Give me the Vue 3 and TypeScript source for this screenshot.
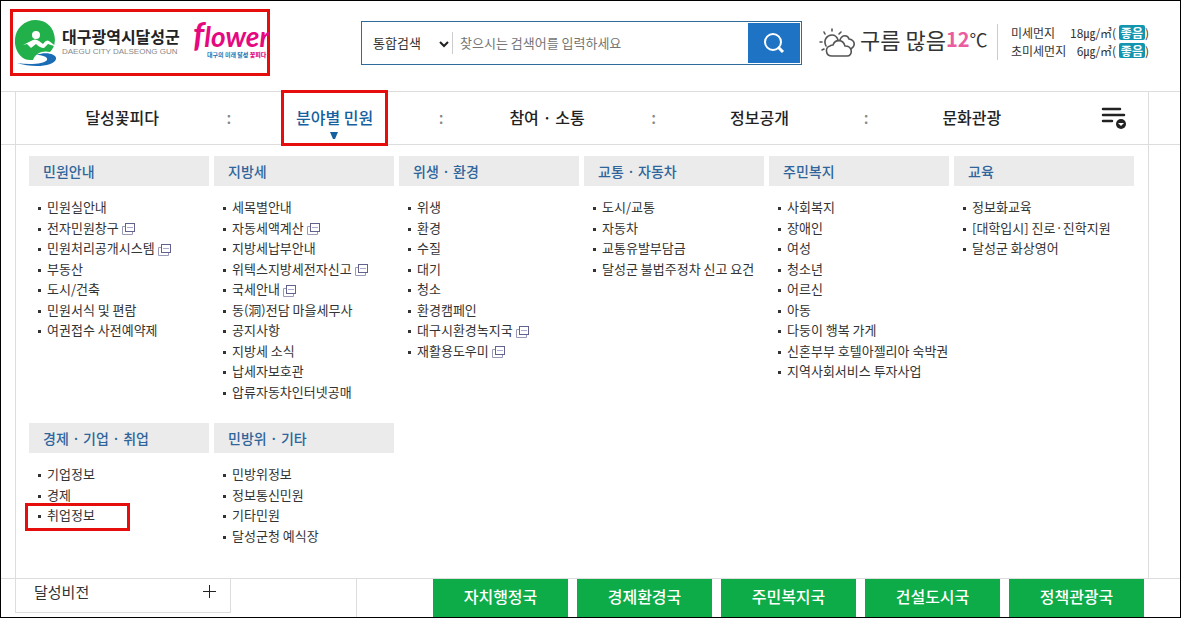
<script setup lang="ts">
import { ref } from 'vue'

interface MenuLink {
  label: string
  external?: boolean
  marked?: boolean
}

interface MenuGroup {
  title: string
  links: MenuLink[]
}

const keyword = ref('')
const scope = ref('통합검색')

const navItems = ['달성꽃피다', '분야별 민원', '참여 · 소통', '정보공개', '문화관광']
const activeNav = ref(1)

const toLinks = (...labels: string[]): MenuLink[] =>
  labels.map((label) => ({
    label: label.replace(/[+!]$/, ''),
    external: label.endsWith('+'),
    marked: label.endsWith('!'),
  }))

const groups: MenuGroup[] = [
  {
    title: '민원안내',
    links: toLinks('민원실안내', '전자민원창구+', '민원처리공개시스템+', '부동산', '도시/건축', '민원서식 및 편람', '여권접수 사전예약제'),
  },
  {
    title: '지방세',
    links: toLinks('세목별안내', '자동세액계산+', '지방세납부안내', '위텍스지방세전자신고+', '국세안내+', '동(洞)전담 마을세무사', '공지사항', '지방세 소식', '납세자보호관', '압류자동차인터넷공매'),
  },
  {
    title: '위생 · 환경',
    links: toLinks('위생', '환경', '수질', '대기', '청소', '환경캠페인', '대구시환경녹지국+', '재활용도우미+'),
  },
  {
    title: '교통 · 자동차',
    links: toLinks('도시/교통', '자동차', '교통유발부담금', '달성군 불법주정차 신고 요건'),
  },
  {
    title: '주민복지',
    links: toLinks('사회복지', '장애인', '여성', '청소년', '어르신', '아동', '다둥이 행복 가게', '신혼부부 호텔아젤리아 숙박권', '지역사회서비스 투자사업'),
  },
  {
    title: '교육',
    links: toLinks('정보화교육', '[대학입시] 진로·진학지원', '달성군 화상영어'),
  },
  { title: '경제 · 기업 · 취업', links: toLinks('기업정보', '경제', '취업정보!') },
  { title: '민방위 · 기타', links: toLinks('민방위정보', '정보통신민원', '기타민원', '달성군청 예식장') },
]

const dust = [
  { label: '미세먼지', value: 18, grade: '좋음' },
  { label: '초미세먼지', value: 6, grade: '좋음' },
]

const bureaus = ['자치행정국', '경제환경국', '주민복지국', '건설도시국', '정책관광국']
</script>

<template>
  <div class="page">
    <header class="top">
      <a class="logo" href="#">
        <svg class="emblem" width="42" height="48" viewBox="0 0 42 48" aria-hidden="true">
          <path d="M8 39 C-3 31 -2 14 6 7 C16 -3 33 0 38 12 C42 22 39 29 35 33 C28 31 20 34 18 41 C14 41 11 41 8 39 Z" fill="#22b04b" />
          <circle cx="21" cy="16" r="4" fill="#fff" />
          <path d="M8 26 L16 22 Q20 19 24 22 L28 25 Q31 20 34 22 L42 28 L33 25 L29 29 Q25 29 21 25 L16 29 L12 25 Z" fill="#fff" />
          <path d="M21 36 C31 32 42 35 41 40 C39 48 17 49 2 44 C15 46 29 45 32 41 C33 38 28 36 21 36 Z" fill="#1a6db5" />
        </svg>
        <span class="names">
          <span class="name-ko">대구광역시달성군</span>
          <span class="name-en">DAEGU CITY DALSEONG GUN</span>
        </span>
        <span class="brand">
          <span class="brand-word"><span class="brand-f">f</span>lower</span>
          <span class="brand-sub">대구의 미래 <b>달성</b> <b class="pink">꽃피다</b></span>
        </span>
      </a>

      <form class="search" @submit.prevent>
        <span class="scope">
          <select v-model="scope" aria-label="검색 범위">
            <option>통합검색</option>
          </select>
          <svg class="chevron" width="10" height="8" viewBox="0 0 10 8" aria-hidden="true">
            <path d="M1 2 L5 6 L9 2" fill="none" stroke="#222" stroke-width="2" />
          </svg>
        </span>
        <input v-model="keyword" type="text" placeholder="찾으시는 검색어를 입력하세요" aria-label="검색어" />
        <button type="submit" aria-label="검색">
          <svg width="22" height="22" viewBox="0 0 22 22" aria-hidden="true">
            <circle cx="10" cy="10" r="8" fill="none" stroke="#fff" stroke-width="2" />
            <path d="M15 15 L20 20" stroke="#fff" stroke-width="3" />
          </svg>
        </button>
      </form>

      <div class="weather">
        <svg width="36" height="30" viewBox="0 0 36 30" fill="none" stroke="#555" stroke-width="1.600" stroke-linecap="round" aria-hidden="true">
          <path d="M13 1 V3 M5 4 L6 6 M1 14 H3 M3 22 L5 21 M22 4 L20 6" />
          <path d="M7 18 C4 12 8 7 13 7 C16 7 18 9 19 12" />
          <path d="M21 12 C23 6 29 7 30 11 C36 12 37 18 32 21" />
          <path d="M13 28 C6 28 6 19 11 18 C12 17 13 17 14 17 C16 11 24 11 26 18 C34 18 34 28 28 28 Z" />
        </svg>
        <span class="sky">구름 많음</span><strong>12</strong><span class="unit">℃</span>
      </div>

      <dl class="dust">
        <div v-for="d in dust" :key="d.label" class="dust-row">
          <dt>{{ d.label }}</dt>
          <dd>{{ d.value }}㎍/㎥( <em>{{ d.grade }}</em>)</dd>
        </div>
      </dl>
    </header>

    <nav class="bar">
      <div class="inner bar-inner">
        <ul class="nav">
          <li v-for="(item, i) in navItems" :key="item">
            <a href="#" :class="{ active: i === activeNav }" @mouseenter="activeNav = i">
              {{ item }}
              <svg v-if="i === activeNav" class="arrow" width="8" height="7" viewBox="0 0 8 7" aria-hidden="true">
                <path d="M0 0 H8 L5 7 H3 Z" fill="#15609f" />
              </svg>
            </a>
          </li>
        </ul>
        <button class="all" type="button" aria-label="전체메뉴">
          <svg width="26" height="24" viewBox="0 0 26 24" aria-hidden="true">
            <path d="M3 3 H20 M3 9 H24 M3 15 H12" stroke="#222" stroke-width="2.500" stroke-linecap="round" />
            <circle cx="21" cy="18" r="5" fill="#222" />
            <path d="M18 17 H24 L21 20 Z" fill="#fff" />
          </svg>
        </button>
      </div>
    </nav>

    <main class="inner panel">
      <section v-for="g in groups" :key="g.title">
        <h2>{{ g.title }}</h2>
        <ul class="links">
          <li v-for="l in g.links" :key="l.label" :class="{ marked: l.marked }">
            <a href="#">{{ l.label }}</a>
            <svg v-if="l.external" class="ext" width="14" height="12" viewBox="0 0 14 12" aria-hidden="true">
              <path d="M3 3.500 H0.500 V11.500 H10.500 V9" fill="none" stroke="#9a9ab8" />
              <rect x="3.500" y="0.500" width="9" height="8" fill="#fff" stroke="#62628f" />
              <path d="M5 4.500 H11" stroke="#a9a9d0" />
            </svg>
          </li>
        </ul>
      </section>
    </main>

    <footer class="bottom">
      <div class="vision-col">
        <button class="vision" type="button">
          <span>달성비전</span>
          <svg width="13" height="13" viewBox="0 0 13 13" aria-hidden="true">
            <path d="M6.500 0 V13 M0 6.500 H13" stroke="#222" />
          </svg>
        </button>
      </div>
      <div class="bureaus">
        <a v-for="b in bureaus" :key="b" href="#">{{ b }}</a>
      </div>
    </footer>
  </div>
</template>

<style>
body {
  margin: 0;
}
</style>

<style scoped>
*,
*::before,
*::after {
  box-sizing: border-box;
}

.page {
  display: flex;
  flex-direction: column;
  min-height: 100vh;
  border: 1px solid #000;
  background: #fff;
  color: #333;
  font-family: "Noto Sans CJK KR", sans-serif;
  font-size: 13px;
  line-height: 20px;
}

a {
  color: inherit;
  text-decoration: none;
}

ul,
dl,
dd,
h2 {
  margin: 0;
  padding: 0;
  list-style: none;
}

button,
input,
select {
  border: 0;
  padding: 0;
  background: none;
  color: inherit;
  font: inherit;
}

.top {
  display: flex;
  align-items: flex-start;
  height: 90px;
  padding: 8px 31px 0 9px;
}

.logo {
  display: flex;
  flex: none;
  width: 260px;
  height: 67px;
  padding: 7px 0 0 2px;
  border: 3px solid #e60d0d;
}

.emblem {
  flex: none;
}

.names {
  display: flex;
  flex: none;
  flex-direction: column;
  width: 122px;
  margin: 7px 0 0 5px;
  white-space: nowrap;
}

.name-ko {
  color: #222;
  font-size: 16px;
  font-weight: 700;
  line-height: 20px;
}

.name-en {
  color: #888;
  font-family: "Liberation Sans", sans-serif;
  font-size: 8px;
  line-height: 12px;
}

.brand {
  display: flex;
  flex: none;
  flex-direction: column;
  margin: 0 0 0 9px;
  white-space: nowrap;
}

.brand-word {
  color: #e5087e;
  font-family: Lato, sans-serif;
  font-size: 28px;
  font-style: italic;
  font-weight: 700;
  line-height: 30px;
}

.brand-f {
  font-size: 34px;
}

.brand-sub {
  padding-left: 14px;
  color: #1a78b8;
  font-size: 6px;
  font-weight: 700;
  line-height: 8px;
}

.pink {
  color: #e5087e;
}

.search {
  display: flex;
  flex: 0 1 441px;
  align-items: center;
  height: 44px;
  margin: 12px 0 0 91px;
  padding: 1px;
  border: 1px solid #2f6c9c;
}

.scope {
  position: relative;
  flex: none;
  width: 90px;
  border-right: 1px solid #ccc;
}

.scope select {
  width: 100%;
  height: 22px;
  padding-left: 10px;
  appearance: none;
}

.chevron {
  position: absolute;
  top: 8px;
  right: 3px;
  pointer-events: none;
}

.search input {
  flex: 1;
  min-width: 0;
  height: 30px;
  padding: 0 0 2px 7px;
  outline: 0;
}

.search input::placeholder {
  color: #757575;
  opacity: 1;
}

.search button {
  display: flex;
  flex: none;
  align-items: center;
  justify-content: center;
  width: 52px;
  height: 40px;
  background: #1e73c4;
}

.weather {
  display: flex;
  flex: none;
  align-items: center;
  height: 36px;
  margin: 12px 0 0 17px;
  white-space: nowrap;
}

.weather svg {
  margin: 8px 5px 0 0;
}

.sky {
  font-size: 22px;
}

.weather strong {
  color: #ea5da0;
  font-size: 20px;
  font-weight: 700;
}

.unit {
  font-size: 18px;
}

.dust {
  flex: none;
  width: 152px;
  margin: 15px 0 0 auto;
  padding-left: 13px;
  border-left: 1px solid #ccc;
  font-size: 12px;
  line-height: 18px;
}

.dust-row {
  display: flex;
  justify-content: space-between;
  white-space: nowrap;
}

.dust em {
  display: inline-block;
  padding: 0 2px;
  border-radius: 2px;
  background: #1295ae;
  color: #fff;
  font-style: normal;
  font-weight: 700;
  line-height: 15px;
}

.bar {
  border-top: 1px solid #ddd;
  border-bottom: 1px solid #ddd;
}

.inner {
  margin: 0 31px 0 14px;
  border: solid #ddd;
  border-width: 0 1px;
}

.bar-inner {
  display: flex;
  height: 52px;
}

.nav {
  display: flex;
  flex: 1;
}

.nav li {
  position: relative;
  display: flex;
  flex: 1;
  align-items: center;
  justify-content: center;
  padding-bottom: 2px;
  color: #222;
  font-size: 16px;
  font-weight: 500;
}

.nav li + li::before {
  content: ":";
  position: absolute;
  left: -2px;
  color: #888;
}

.nav a.active {
  position: relative;
  display: flex;
  flex: none;
  align-items: center;
  justify-content: center;
  width: 107px;
  height: 56px;
  margin-bottom: -2px;
  padding-bottom: 2px;
  border: 3px solid #e60d0d;
  color: #15609f;
}

.arrow {
  position: absolute;
  bottom: 4px;
  left: 46px;
}

.all {
  flex: none;
  width: 70px;
}

.all svg {
  display: block;
  margin: 0 auto;
}

.panel {
  display: grid;
  flex: 1;
  grid-template-columns: repeat(6, 1fr);
  gap: 21px 5px;
  align-content: start;
  padding: 11px 14px 32px 13px;
}

.panel section {
  min-width: 0;
}

h2 {
  padding-left: 14px;
  background: #ebebeb;
  color: #2f659b;
  font-size: 14px;
  font-weight: 500;
  line-height: 30px;
}

.links {
  padding: 11px 0 0 9px;
}

.links li {
  position: relative;
  display: flex;
  align-items: center;
  height: 20px;
  white-space: nowrap;
}

.links li:nth-child(even) {
  height: 21px;
}

.links li::before {
  content: "";
  width: 3px;
  height: 3px;
  margin: 3px 6px 0 0;
  background: #333;
}

.links .ext {
  margin: 3px 0 0 3px;
}

.links .marked::after {
  content: "";
  position: absolute;
  top: -2px;
  left: -13px;
  width: 105px;
  height: 28px;
  border: 3px solid #e60d0d;
}

.bottom {
  display: flex;
  height: 39px;
  padding: 0 36px 0 14px;
  border-top: 1px solid #ddd;
}

.vision-col {
  flex: none;
  width: 342px;
  border-right: 1px solid #ddd;
}

.vision {
  display: flex;
  align-items: center;
  justify-content: space-between;
  width: 216px;
  height: 34px;
  padding: 0 14px 8px 18px;
  border: solid #ddd;
  border-width: 0 1px 1px;
  font-size: 15px;
}

.bureaus {
  display: flex;
  flex: 1;
  gap: 9px;
  margin-left: 76px;
}

.bureaus a {
  flex: 1;
  background: #0dac49;
  color: #fff;
  font-size: 16px;
  font-weight: 500;
  line-height: 34px;
  text-align: center;
}
</style>
